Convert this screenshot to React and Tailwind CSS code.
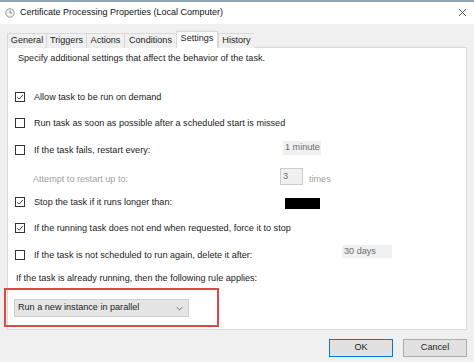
import { useState } from 'react';

// Windows "Task properties" dialog, Settings tab
const tabs = [
  { label: 'General', w: 'w-[39px]' },
  { label: 'Triggers', w: 'w-[40px]' },
  { label: 'Actions', w: 'w-[38px]' },
  { label: 'Conditions', w: 'w-[52px]' },
  { label: 'Settings', w: 'w-[42px]' },
  { label: 'History', w: 'w-[36px]' },
];

function Checkbox({ checked, onChange }) {
  return (
    <button
      onClick={onChange}
      className="w-[10px] h-[10px] shrink-0 border border-[#333333] bg-white flex items-center justify-center -translate-y-[1px]"
    >
      {checked && (
        <svg viewBox="0 0 10 10" className="w-[8px] h-[8px]">
          <polyline points="1.5,5.2 4,7.6 8.6,2.4" fill="none" stroke="#222" strokeWidth="1.1" />
        </svg>
      )}
    </button>
  );
}

function ClockIcon() {
  return (
    <svg viewBox="0 0 10 10" className="w-[10px] h-[10px]">
      <circle cx="5" cy="5" r="4.2" fill="#f4f4f4" stroke="#8a8a8a" strokeWidth="0.9" />
      <path d="M5 2.4 V5 H7" fill="none" stroke="#6a6a6a" strokeWidth="0.8" />
    </svg>
  );
}

export default function App() {
  const [active, setActive] = useState('Settings');
  const [opts, setOpts] = useState({
    onDemand: true,
    asap: false,
    restart: false,
    stopLong: true,
    forceStop: true,
    deleteAfter: false,
  });

  const toggle = (k) => setOpts((o) => ({ ...o, [k]: !o[k] }));

  return (
    <div className="w-[474px] h-[362px] bg-[#f0f0f0] flex flex-col overflow-hidden font-['Liberation_Sans',Arial,sans-serif] text-[9.1px] text-[#1b1b1b]">
      {/* window border strip */}
      <div className="h-[2px] bg-[#8fa3b4]" />

      {/* Title bar */}
      <div className="h-[22px] bg-white flex items-center pl-[5px] pr-[6px]">
        <ClockIcon />
        <span className="ml-[5px] flex-1 text-[9px] text-[#111]">
          Certificate Processing Properties (Local Computer)
        </span>
        <svg viewBox="0 0 10 10" className="w-[9px] h-[9px] mr-[1px] -translate-y-[1px]">
          <path d="M1 1 L9 9 M9 1 L1 9" stroke="#333" strokeWidth="0.9" />
        </svg>
      </div>

      {/* Tabs */}
      <div className="pt-[7px] px-[7px] flex items-end h-[24px] relative z-10 -mb-px">
        {tabs.map((t) => {
          const sel = t.label === active;
          return (
            <button
              key={t.label}
              onClick={() => setActive(t.label)}
              className={
                sel
                  ? `${t.w} h-[17px] bg-white border border-b-0 border-[#d9d9d9] flex items-center justify-center pb-[2px]`
                  : `${t.w} h-[15px] bg-[#f0f0f0] border border-b-0 border-r-0 border-[#d9d9d9] flex items-center justify-center`
              }
            >
              {t.label}
            </button>
          );
        })}
      </div>

      {/* Panel */}
      <div className="mx-[7px] h-[283px] bg-white border border-[#d9d9d9] flex flex-col">
        <div className="h-[21px] flex items-center pl-[10px]">
          Specify additional settings that affect the behavior of the task.
        </div>
        <div className="h-[16px]" />

        <div className="h-[26px] flex items-center pl-[7px] gap-[9px]">
          <Checkbox checked={opts.onDemand} onChange={() => toggle('onDemand')} />
          <span>Allow task to be run on demand</span>
        </div>

        <div className="h-[26px] flex items-center pl-[7px] gap-[9px]">
          <Checkbox checked={opts.asap} onChange={() => toggle('asap')} />
          <span>Run task as soon as possible after a scheduled start is missed</span>
        </div>

        <div className="h-[27px] flex items-center pl-[7px] gap-[9px]">
          <Checkbox checked={opts.restart} onChange={() => toggle('restart')} />
          <span className="w-[249px]">If the task fails, restart every:</span>
          <div className="-ml-[9px] w-[38px] h-[14px] bg-[#f0f0f0] text-[#6d6d6d] flex items-center pl-[2px] -translate-y-[3px]">
            1 minute
          </div>
        </div>

        <div className="h-[27px] flex items-center pl-[25px] pt-[4px] text-[#a0a0a0]">
          <span className="w-[247px]">Attempt to restart up to:</span>
          <div className="w-[23px] h-[17px] border border-[#cccccc] bg-[#f0f0f0] flex items-center pl-[2px] -translate-y-[3px] text-[#6d6d6d]">
            3
          </div>
          <span className="ml-[6px]">times</span>
        </div>

        <div className="h-[24px] flex items-center pl-[7px] gap-[9px]">
          <Checkbox checked={opts.stopLong} onChange={() => toggle('stopLong')} />
          <span className="w-[251px]">Stop the task if it runs longer than:</span>
          <div className="-ml-[9px] w-[35px] h-[11px] bg-black" />
        </div>

        <div className="h-[27px] flex items-center pl-[7px] gap-[9px]">
          <Checkbox checked={opts.forceStop} onChange={() => toggle('forceStop')} />
          <span>If the running task does not end when requested, force it to stop</span>
        </div>

        <div className="h-[27px] flex items-center pl-[7px] gap-[9px]">
          <Checkbox checked={opts.deleteAfter} onChange={() => toggle('deleteAfter')} />
          <span className="w-[308px]">If the task is not scheduled to run again, delete it after:</span>
          <div className="-ml-[9px] w-[50px] h-[13px] bg-[#f0f0f0] text-[#6d6d6d] flex items-center pl-[2px] -translate-y-[4px]">
            30 days
          </div>
        </div>

        <div className="h-[19px] flex items-center pl-[8px]">
          If the task is already running, then the following rule applies:
        </div>

        {/* highlighted select */}
        <div className="-ml-[4px] w-[215px] h-[39px] border-2 border-[#e04848] pl-[8px] pt-[9px]">
          <button className="w-[175px] h-[18px] bg-[#e5e5e5] border border-[#cfcfcf] flex items-center justify-between pl-[3px] pr-[5px]">
            <span>Run a new instance in parallel</span>
            <svg viewBox="0 0 10 6" className="w-[7px] h-[5px]">
              <polyline points="1,1 5,5 9,1" fill="none" stroke="#444" strokeWidth="1" />
            </svg>
          </button>
        </div>
      </div>

      {/* Buttons */}
      <div className="mt-[9px] flex justify-end gap-[10px] pr-[7px]">
        <button className="w-[64px] h-[18px] bg-[#e1e1e1] border border-[#0078d7]">OK</button>
        <button className="w-[64px] h-[18px] bg-[#e1e1e1] border border-[#adadad]">Cancel</button>
      </div>
    </div>
  );
}
